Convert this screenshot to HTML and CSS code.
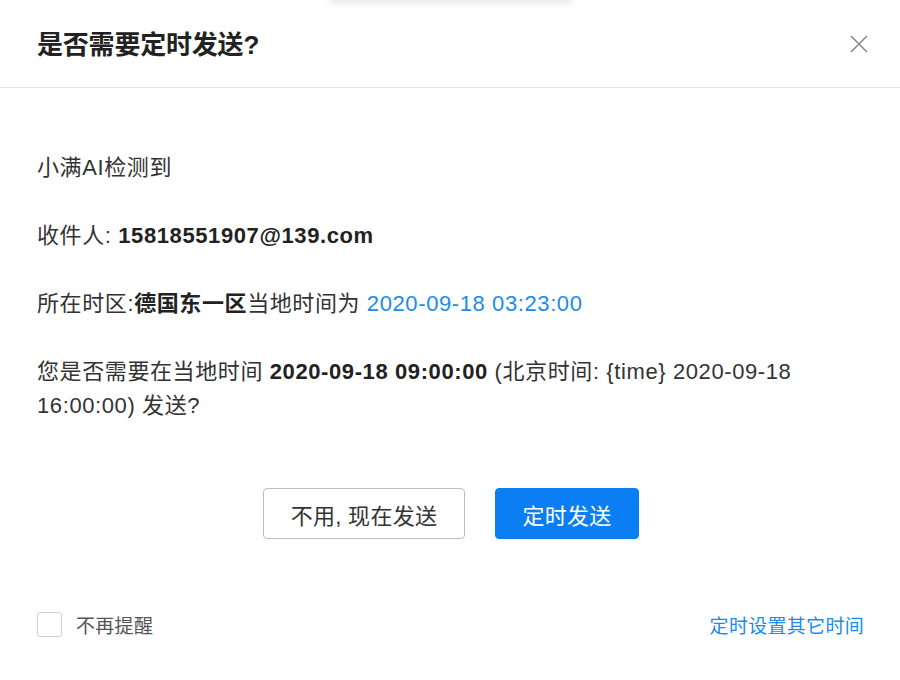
FILE: index.html
```html
<!DOCTYPE html>
<html lang="zh-CN">
<head>
    <meta charset="UTF-8">
    <meta name="viewport" content="width=device-width, initial-scale=1.0">
    <title>是否需要定时发送?</title>
    <link rel="stylesheet" href="styles.css">
</head>
<body>
    <div class="ghost"></div>
    <div class="dialog">
        <div class="dialog-header">
            <h2 class="dialog-title">是否需要定时发送?</h2>
            <button class="close-btn" aria-label="关闭">
                <svg width="18" height="18" viewBox="0 0 18 18">
                    <path d="M1 1 L17 17 M17 1 L1 17" stroke="#8a8a8a" stroke-width="1.6" fill="none"/>
                </svg>
            </button>
        </div>

        <div class="dialog-body">
            <p>小满AI检测到</p>
            <p>收件人: <b>15818551907@139.com</b></p>
            <p>所在时区:<b>德国东一区</b>当地时间为 <span class="blue">2020-09-18 03:23:00</span></p>
            <p>您是否需要在当地时间 <b>2020-09-18 09:00:00</b> (北京时间: {time} 2020-09-18 16:00:00) 发送?</p>
        </div>

        <div class="dialog-actions">
            <button class="btn btn-default">不用, 现在发送</button>
            <button class="btn btn-primary">定时发送</button>
        </div>

        <div class="dialog-footer">
            <label class="remember">
                <span class="checkbox"></span>
                不再提醒
            </label>
            <a class="link" href="#">定时设置其它时间</a>
        </div>
    </div>
</body>
</html>
```

FILE: styles.css
```css
/* Reset and fonts */
* {
    margin: 0;
    padding: 0;
    box-sizing: border-box;
}
body {
    font-family: "Liberation Sans", "Noto Sans CJK SC", sans-serif;
    background-color: #ffffff;
    color: #333;
    width: 900px;
    height: 680px;
    overflow: hidden;
    position: relative;
}

/* faint shadow of the toolbar peeking above the dialog */
.ghost {
    position: absolute;
    left: 328px;
    top: -30px;
    width: 246px;
    height: 30px;
    border-radius: 8px;
    box-shadow: 0 2px 8px rgba(0, 0, 0, 0.12);
}

/* Header */
.dialog-header {
    height: 88px;
    display: flex;
    align-items: center;
    justify-content: space-between;
    padding: 0 31px 0 37px;
    border-bottom: 1px solid #e6e6e6;
}
.dialog-title {
    font-size: 26px;
    font-weight: 600;
    color: #222;
    letter-spacing: -0.2px;
    padding-bottom: 2px;
}
.close-btn {
    border: none;
    background: none;
    width: 20px;
    height: 20px;
    display: flex;
    align-items: center;
    justify-content: center;
    cursor: pointer;
}

/* Body */
.dialog-body {
    padding: 63px 37px 0 37px;
    font-size: 22px;
    letter-spacing: 0.6px;
    line-height: 33px;
    color: #333;
}
.dialog-body p {
    margin-bottom: 35px;
}
.dialog-body p:last-child {
    margin-bottom: 0;
}
.dialog-body p:nth-child(4) {
    line-height: 34px;
}
.dialog-body b {
    font-weight: 700;
    color: #222;
}
.blue {
    color: #1a8bf0;
}

/* Buttons */
.dialog-actions {
    display: flex;
    justify-content: center;
    gap: 30px;
    margin-top: 65px;
    padding-left: 2px;
}
.btn {
    height: 51px;
    border-radius: 4px;
    font-family: inherit;
    font-size: 22px;
    letter-spacing: 0.3px;
    cursor: pointer;
}
.btn-default {
    width: 202px;
    background: #fff;
    color: #333;
    border: 1px solid #bfbfbf;
}
.btn-primary {
    width: 144px;
    background: #0a7ef2;
    color: #fff;
    border: 1px solid #0a7ef2;
}

/* Footer */
.dialog-footer {
    display: flex;
    align-items: center;
    justify-content: space-between;
    margin-top: 72px;
    padding: 0 36px 0 37px;
    font-size: 19px;
    letter-spacing: 0.3px;
}
.remember {
    display: flex;
    align-items: center;
    gap: 14px;
    color: #555;
}
.checkbox {
    width: 25px;
    height: 25px;
    border: 1px solid #cfcfcf;
    border-radius: 3px;
}
.link {
    color: #1a8bf0;
    text-decoration: none;
}
```
